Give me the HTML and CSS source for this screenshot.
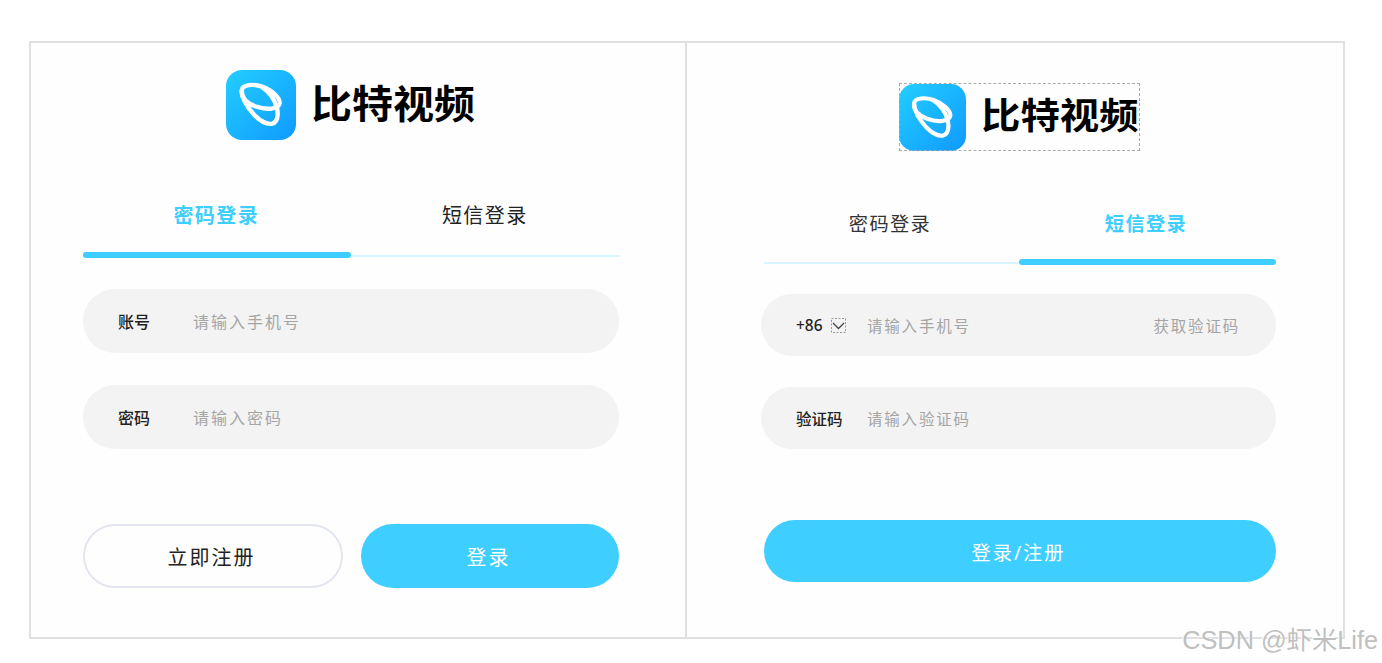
FILE: index.html
```html
<!DOCTYPE html>
<html lang="zh-CN">
<head>
  <meta charset="UTF-8">
  <meta name="viewport" content="width=device-width, initial-scale=1.0">
  <title>比特视频</title>
  <link rel="stylesheet" href="styles.css">
</head>
<body>
  <!-- 渐变色和 logo 图形，两个面板共用 -->
  <svg class="defs" width="0" height="0">
    <defs>
      <linearGradient id="logoBg" x1="0" y1="0" x2="1" y2="1">
        <stop offset="0" stop-color="#22ceff"/>
        <stop offset="1" stop-color="#109aff"/>
      </linearGradient>
      <symbol id="logo" viewBox="0 0 210 210">
        <rect width="210" height="210" rx="48" fill="url(#logoBg)"/>
        <g fill="none" stroke="#fff" stroke-width="13" stroke-linejoin="round">
          <path d="M47 61C49 43 82 41 108 50C139 61 162 83 161 99C159 118 121 121 88 109C63 99 45 82 47 61Z"/>
          <path d="M47 61C48 83 64 112 85 135C105 156 126 164 139 161C154 157 158 136 153 114C146 88 130 65 106 50"/>
        </g>
      </symbol>
    </defs>
  </svg>

  <div class="panels">
    <!-- 密码登录 -->
    <div class="panel panel-password">
      <div class="brand">
        <svg class="brand-icon"><use href="#logo"/></svg>
        <span class="brand-name">比特视频</span>
      </div>
      <div class="tabs">
        <div class="tab active">密码登录</div>
        <div class="tab">短信登录</div>
      </div>
      <div class="field">
        <span class="label">账号</span>
        <span class="placeholder">请输入手机号</span>
      </div>
      <div class="field">
        <span class="label">密码</span>
        <span class="placeholder">请输入密码</span>
      </div>
      <div class="actions">
        <div class="btn btn-plain">立即注册</div>
        <div class="btn btn-primary">登录</div>
      </div>
    </div>

    <!-- 短信登录 -->
    <div class="panel panel-sms">
      <div class="brand">
        <svg class="brand-icon"><use href="#logo"/></svg>
        <span class="brand-name">比特视频</span>
      </div>
      <div class="tabs">
        <div class="tab">密码登录</div>
        <div class="tab active">短信登录</div>
      </div>
      <div class="field">
        <span class="label">+86
          <svg class="arrow" width="15" height="15" viewBox="0 0 15 15" fill="none">
            <rect x="0.5" y="0.5" width="14" height="14" stroke="#999" stroke-dasharray="2 1.5"/>
            <path d="M2 5l5.5 5.5L13 5" stroke="#444" stroke-width="1.3"/>
          </svg>
        </span>
        <span class="placeholder">请输入手机号</span>
        <span class="get-code">获取验证码</span>
      </div>
      <div class="field">
        <span class="label">验证码</span>
        <span class="placeholder">请输入验证码</span>
      </div>
      <div class="actions">
        <div class="btn btn-primary">登录/注册</div>
      </div>
    </div>
  </div>

  <div class="watermark">CSDN @虾米Life</div>
</body>
</html>
```

FILE: styles.css
```css
* {
  box-sizing: border-box;
}
body {
  margin: 0;
  height: 663px;
  padding: 41px 0 0 29px;
  background: #fff;
  font-family: "Noto Sans", "Noto Sans CJK SC", sans-serif;
  color: #222;
  overflow: hidden;
}
.defs {
  display: block;
}
.panels {
  display: flex;
  width: 1316px;
  height: 598px;
  border: 2px solid #e0e0e3;
  background: #fefefe;
}
.panel {
  display: flex;
  flex-direction: column;
}
.panel-password {
  width: 656px;
  padding: 27px 65px 0 52px;
  border-right: 2px solid #e0e0e3;
}
.panel-sms {
  width: 656px;
  padding: 40px 67px 0 74px;
}

/* logo */
.brand {
  display: flex;
  align-items: center;
  width: 250px;
  height: 70px;
  margin-left: 143px;
}
.brand-icon {
  width: 70px;
  height: 70px;
  flex: none;
}
.brand-name {
  margin-left: 15px;
  font-size: 41px;
  font-weight: 700;
  line-height: 1;
  color: #000;
  white-space: nowrap;
  transform: translateY(-2px) scaleY(0.93);
}
.panel-sms .brand {
  width: 241px;
  height: 68px;
  margin-left: 138px;
  outline: 1px dashed #aaa;
  outline-offset: -1px;
}
.panel-sms .brand-icon {
  width: 67px;
  height: 67px;
}
.panel-sms .brand-name {
  font-size: 39.4px;
  transform: translateY(-1px) scaleY(0.93);
}

/* tabs */
.tabs {
  display: flex;
  align-items: flex-end;
  width: 537px;
  height: 62px;
  margin-top: 56px;
  background: linear-gradient(#d8f4ff, #d8f4ff) 0 59px / 100% 2px no-repeat;
}
.tab {
  position: relative;
  flex: 1;
  height: 62px;
  padding-right: 2px;
  line-height: 40px;
  text-align: center;
  font-size: 20px;
  letter-spacing: 1.4px;
}
.tab.active {
  color: #3eceff;
  font-weight: 700;
}
.tab.active::after {
  content: "";
  position: absolute;
  left: 0;
  bottom: 0;
  width: 268px;
  height: 6px;
  border-radius: 3px;
  background: #3eceff;
}
.panel-sms .tabs {
  width: 512px;
  height: 60px;
  margin: 54px 0 0 3px;
  background-position: 0 57px;
}
.panel-sms .tab {
  height: 60px;
  padding-right: 4px;
  line-height: 38px;
  font-size: 19.2px;
  color: #333;
}
.panel-sms .tab.active {
  color: #3eceff;
}
.panel-sms .tab.active::after {
  left: -1px;
  width: 257px;
}

/* inputs */
.field {
  display: flex;
  align-items: center;
  width: 536px;
  height: 64px;
  margin-top: 32px;
  padding: 0 35px;
  border-radius: 32px;
  background: #f3f3f3;
  font-size: 16px;
}
.tabs + .field {
  margin-top: 31px;
}
.label {
  display: flex;
  align-items: center;
  gap: 7px;
  width: 75px;
  font-weight: 500;
}
.placeholder,
.get-code {
  color: #a5a5a5;
  letter-spacing: 2px;
}
.get-code {
  margin-left: auto;
}
.panel-sms .field {
  width: 515px;
  height: 62px;
  margin-top: 31px;
  font-size: 15.5px;
}
.panel-sms .tabs + .field {
  margin-top: 29px;
}
.panel-sms .label {
  gap: 8px;
  width: 71px;
}
.panel-sms .placeholder,
.panel-sms .get-code {
  letter-spacing: 1.8px;
}
.panel-sms .get-code {
  margin-right: 1px;
}

/* buttons */
.actions {
  display: flex;
  gap: 18px;
  width: 536px;
  margin-top: 75px;
}
.btn {
  width: 100%;
  height: 64px;
  padding-right: 3px;
  border-radius: 32px;
  line-height: 67px;
  text-align: center;
  font-size: 20px;
  letter-spacing: 2px;
}
.btn-plain {
  border: 2px solid #e4e6ef;
  line-height: 63px;
}
.btn-primary {
  background: #3eceff;
  color: #fff;
}
.panel-sms .actions {
  width: 512px;
  margin: 71px 0 0 3px;
}
.panel-sms .btn {
  height: 62px;
  line-height: 65px;
  font-size: 19.2px;
}

.watermark {
  position: absolute;
  right: 4px;
  bottom: 4px;
  font-family: "Liberation Sans", "Noto Sans CJK SC", sans-serif;
  font-size: 25.3px;
  line-height: 38px;
  color: #c0c0c0;
  text-shadow: -1px -1px 0 #fff;
  white-space: nowrap;
}
```
